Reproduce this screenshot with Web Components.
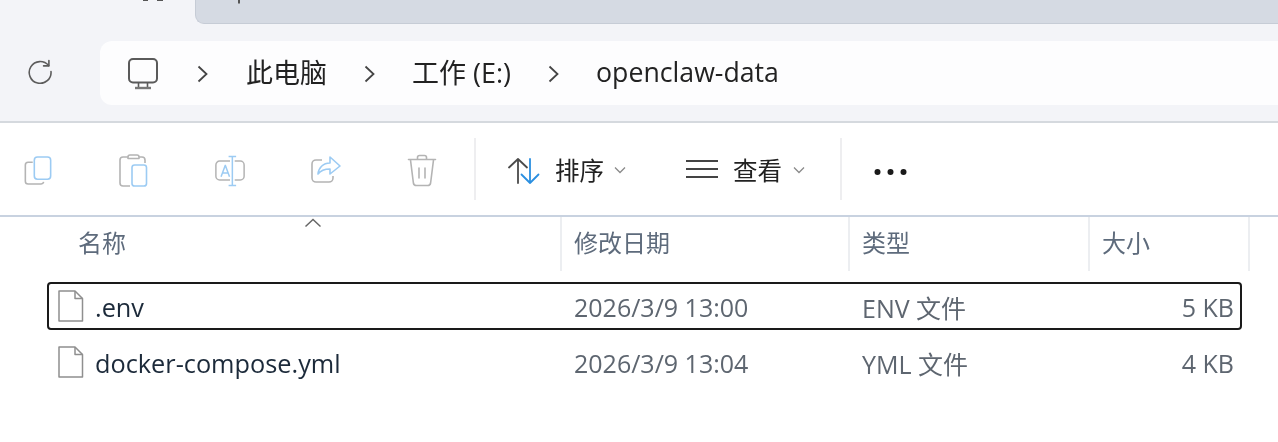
<!DOCTYPE html>
<html lang="zh">
<head>
<meta charset="utf-8">
<title>openclaw-data</title>
<style>
  html, body { margin: 0; background: #fff; }
  body { width: 1278px; height: 442px; overflow: hidden; font-family: "Open Sans", "Noto Sans CJK SC", sans-serif; }
</style>
</head>
<body>
<explorer-window>
  <tab-strip slot="tabs"></tab-strip>
  <nav-bar slot="nav">
    <path-crumb kind="pc"></path-crumb>
    <path-crumb>此电脑</path-crumb>
    <path-crumb>工作 (E:)</path-crumb>
    <path-crumb last>openclaw-data</path-crumb>
  </nav-bar>
  <command-bar slot="commands"></command-bar>
  <file-table slot="files">
    <file-row name=".env" date="2026/3/9 13:00" type="ENV 文件" size="5 KB" selected></file-row>
    <file-row name="docker-compose.yml" date="2026/3/9 13:04" type="YML 文件" size="4 KB"></file-row>
  </file-table>
</explorer-window>

<script>
const define = (name, cls) => {
  if (!customElements.get(name)) customElements.define(name, cls)
}

const GREY = '#b4b4b4'
const BLUE = '#9ccbf3'

const ICONS = {
  refresh: `<svg width="28" height="28" viewBox="0 0 28 28" fill="none" stroke="#5c5c5c" stroke-width="1.6" stroke-linecap="round" stroke-linejoin="round"><path d="M22.6 9.6A10.9 10.9 0 1 0 25 15.5"/><path d="M22.9 4.6v5.3h-5.3"/></svg>`,
  pc: `<svg width="34" height="34" viewBox="0 0 34 34" fill="none" stroke="#5a5a5a" stroke-width="2"><rect x="3" y="2" width="28" height="23.5" rx="4"/><path d="M12.5 26v4M21.5 26v4" stroke-width="1.6"/><path d="M9 31h16" stroke-width="2.4" stroke="#777"/></svg>`,
  copy: `<svg width="30" height="29" viewBox="2 0.5 26 27.500" fill="none" stroke-width="1.5" stroke-linejoin="round"><path d="M10 6.5H5.6A2.6 2.6 0 0 0 3 9.1v15.3A2.6 2.6 0 0 0 5.6 27H18a2.6 2.6 0 0 0 2.4-2" stroke="${GREY}"/><rect x="11.5" y="1.5" width="15.500" height="21" rx="3" stroke="${BLUE}"/></svg>`,
  paste: `<svg width="32" height="36" viewBox="0 0 32 36" fill="none" stroke-width="1.6" stroke-linejoin="round"><path d="M10 4H5A3 3 0 0 0 2 7v23a3 3 0 0 0 3 3h7M21 4h3a3 3 0 0 1 3 3v3" stroke="${GREY}"/><path d="M10 5.500V4a2 2 0 0 1 2-2h7a2 2 0 0 1 2 2v1.500z" stroke="${GREY}"/><rect x="14" y="12" width="14.500" height="21" rx="2.600" stroke="${BLUE}"/></svg>`,
  rename: `<svg width="34" height="34" viewBox="0 0 34 34" fill="none" stroke-width="1.6" stroke-linejoin="round"><path d="M17 6.500H6A4 4 0 0 0 2 10.500v12a4 4 0 0 0 4 4h11M22 6.500h6a4 4 0 0 1 4 4v12a4 4 0 0 1-4 4h-6" stroke="${GREY}"/><path d="M19.500 1.500v31M15.500 1.500h8M15.500 32.500h8M7.500 23l4.500-12 4.500 12M9.200 19h5.600" stroke="${BLUE}"/></svg>`,
  share: `<svg width="32" height="32" viewBox="0 0 32 32" fill="none" stroke-width="1.6" stroke-linejoin="round"><path d="M12 5H6a4 4 0 0 0-4 4v14a4 4 0 0 0 4 4h13a4 4 0 0 0 4-4v-2" stroke="${GREY}"/><path d="M20 2l10 9-10 8v-5c-5 0-9 1-12 5 .5-6 5-11 12-11z" stroke="${BLUE}"/></svg>`,
  trash: `<svg width="30" height="34" viewBox="0 0 30 34" fill="none" stroke="${GREY}" stroke-width="1.600" stroke-linejoin="round" stroke-linecap="round"><path d="M1.500 5.500h27M10.500 5V3.500a2 2 0 0 1 2-2h5a2 2 0 0 1 2 2V5M3.500 6l2.900 23a3 3 0 0 0 3 2.500h11.200a3 3 0 0 0 3-2.500L26.500 6M12 14v10M18 14v10"/></svg>`,
  sort: `<svg width="34" height="28" viewBox="0 0 34 28" fill="none" stroke-width="1.800" stroke-linejoin="round" stroke-linecap="round"><path d="M11 26V2M2 10.500 11 2l9 8.500" stroke="#4a4a4a"/><path d="M23 2v24M14.500 17.500 23 26l8.500-8.500" stroke="#2b8fe0"/></svg>`,
  view: `<svg width="32" height="20" viewBox="0 0 32 20" fill="none" stroke="#444" stroke-width="1.800"><path d="M0 2h32M0 10h32M0 18h32"/></svg>`,
  more: `<svg width="33" height="8" viewBox="0 0 33 8" fill="#1a1a1a"><circle cx="3.500" cy="4" r="3"/><circle cx="16.500" cy="4" r="3"/><circle cx="29.500" cy="4" r="3"/></svg>`,
  chevronDown: `<svg width="12" height="8" viewBox="0 0 12 8" fill="none" stroke="#8a8a8a" stroke-width="1.300"><path d="M1 1.500 6 6.500l5-5"/></svg>`,
  chevronRight: `<svg width="11" height="18" viewBox="0 0 11 18" fill="none" stroke="#444" stroke-width="1.800"><path d="M1.500 1.500 9.500 9l-8 7.500"/></svg>`,
  file: `<svg width="26" height="32" viewBox="0 0 26 32" fill="#fff" stroke="#8f8f8f" stroke-width="1.500" stroke-linejoin="round"><path d="M1 1h16l7.500 7.500V31H1z"/><path d="M17 1v7.500h7.500" fill="none"/></svg>`,
}

class ExplorerWindow extends HTMLElement {
  constructor() {
    super()
    this.attachShadow({ mode: 'open' }).innerHTML = `
      <style>
        :host { display: block; width: 1278px; height: 442px; filter: blur(0.45px); }
        .chrome { display: flex; flex-direction: column; background: #f3f4f8; border-bottom: 2px solid #d5d9de; }
      </style>
      <div class="chrome">
        <slot name="tabs"></slot>
        <slot name="nav"></slot>
      </div>
      <slot name="commands"></slot>
      <slot name="files"></slot>
    `
  }
}

class TabStrip extends HTMLElement {
  constructor() {
    super()
    this.attachShadow({ mode: 'open' }).innerHTML = `
      <style>
        :host { display: flex; height: 24px; padding-left: 195px; position: relative; }
        .tab { flex: 1; background: #d5dae3; border-bottom-left-radius: 9px; border-bottom: 1px solid #c6ccd6; border-left: 1px solid #c6ccd6; }
        .specks { position: absolute; left: 0; top: 0; }
      </style>
      <div class="tab"></div>
      <svg class="specks" width="260" height="4" fill="#555"><rect x="143" y="0" width="5" height="1"/><rect x="157" y="0" width="6" height="1"/><rect x="238" y="0" width="2" height="3.500"/></svg>
    `
  }
}

class NavBar extends HTMLElement {
  constructor() {
    super()
    this.attachShadow({ mode: 'open' }).innerHTML = `
      <style>
        :host { display: flex; height: 97px; box-sizing: border-box; padding-top: 17px; }
        .refresh { width: 100px; display: flex; justify-content: center; padding: 15px 20px 0 0; box-sizing: border-box; height: 64px; }
        .address { flex: 1; height: 64px; box-sizing: border-box; display: flex; align-items: center; background: #fdfdfe; border-radius: 12px 0 0 12px; padding-left: 26px; }
      </style>
      <div class="refresh">${ICONS.refresh}</div>
      <div class="address"><slot></slot></div>
    `
  }
}

class PathCrumb extends HTMLElement {
  constructor() {
    super()
    const isPc = this.getAttribute('kind') === 'pc'
    const isLast = this.hasAttribute('last')
    this.attachShadow({ mode: 'open' }).innerHTML = `
      <style>
        :host { display: flex; align-items: center; color: #222; font-size: 27px; height: 40px; }
        :host([last]) { font-size: 26.700px; }
        .label { margin-top: -3px; }
        .pc { display: flex; margin-top: 2px; }
        .sep { display: flex; margin: 2px 37px 0 37px; }
        :host([kind="pc"]) .sep { margin: 2px 38px 0 37px; }
      </style>
      ${isPc ? `<span class="pc">${ICONS.pc}</span>` : '<span class="label"><slot></slot></span>'}
      ${isLast ? '' : `<span class="sep">${ICONS.chevronRight}</span>`}
    `
  }
}

class CommandButton extends HTMLElement {
  constructor() {
    super()
    this.attachShadow({ mode: 'open' }).innerHTML = `
      <style>
        :host { display: flex; align-items: center; justify-content: center; width: 32px; height: 36px; margin-top: 3px; }
      </style>
      <slot></slot>
    `
  }
}

class CommandBar extends HTMLElement {
  constructor() {
    super()
    const plain = (icon) => `<command-button>${ICONS[icon]}</command-button>`
    this.attachShadow({ mode: 'open' }).innerHTML = `
      <style>
        :host { display: flex; height: 92px; align-items: center; background: #fff; border-bottom: 2px solid #c8d2e0; }
        .edit { display: flex; align-items: center; gap: 64px; padding-left: 22px; }
        .divider { width: 2px; height: 62px; background: #eeeef0; }
        .labelled { display: flex; align-items: center; color: #222; font-size: 24.500px; }
        .labelled svg { display: block; }
        .glyph { display: flex; margin-top: 3px; }
        .chev { display: flex; margin-top: 2px; }
      </style>
      <div class="edit">
        ${plain('copy')}${plain('paste')}${plain('rename')}${plain('share')}${plain('trash')}
      </div>
      <div class="divider" style="margin-left:36px"></div>
      <div class="labelled" style="margin-left:31px">
        <span class="glyph">${ICONS.sort}</span><span style="margin-left:14px">排序</span>
        <span class="chev" style="margin-left:10px">${ICONS.chevronDown}</span>
      </div>
      <div class="labelled" style="margin-left:60px">
        ${ICONS.view}<span style="margin-left:15px">查看</span>
        <span class="chev" style="margin-left:11px">${ICONS.chevronDown}</span>
      </div>
      <div class="divider" style="margin-left:35px"></div>
      <div style="display:flex;margin:6px 0 0 32px">${ICONS.more}</div>
    `
  }
}

class FileTable extends HTMLElement {
  constructor() {
    super()
    this.attachShadow({ mode: 'open' }).innerHTML = `
      <style>
        :host { display: block; background: #fff; }
        .head { display: grid; grid-template-columns: 562px 288px 240px 160px; height: 54px; color: #5e6b7c; font-size: 24px; position: relative; }
        .cell { display: flex; align-items: center; box-sizing: border-box; padding-left: 12px; border-right: 2px solid #eceef1; padding-bottom: 5px; }
        .cell:first-child { padding-left: 78px; }
        .caret { position: absolute; left: 304px; top: 1px; display: flex; }
        .rows { display: flex; flex-direction: column; gap: 8px; padding: 11px 0 0 47px; }
      </style>
      <div class="head">
        <div class="cell">名称</div>
        <div class="cell">修改日期</div>
        <div class="cell">类型</div>
        <div class="cell">大小</div>
        <svg class="caret" width="18" height="10" viewBox="0 0 18 10" fill="none" stroke="#666" stroke-width="1.500"><path d="M1.500 8.500 9 1.500l7.500 7"/></svg>
      </div>
      <div class="rows"><slot></slot></div>
    `
  }
}

class FileRow extends HTMLElement {
  constructor() {
    super()
    const attr = (key) => this.getAttribute(key) || ''
    this.attachShadow({ mode: 'open' }).innerHTML = `
      <style>
        :host { display: grid; grid-template-columns: 515px 288px 240px 1fr; width: 1195px; height: 48px; box-sizing: border-box; align-items: center; color: #5e6670; font-size: 25px; border: 2px solid transparent; border-radius: 4px; }
        :host([selected]) { border-color: #1a1a1a; }
        .name { display: flex; align-items: center; color: #1c2a3a; padding-left: 9px; gap: 10px; font-size: 25.300px; }
        .name svg { flex: none; }
        .name span { margin: 2px 0 0 1px; }
        .cell { padding: 2px 0 0 10px; }
        .size { text-align: right; padding: 2px 6px 0 0; }
      </style>
      <div class="name">${ICONS.file}<span>${attr('name')}</span></div>
      <div class="cell">${attr('date')}</div>
      <div class="cell">${attr('type')}</div>
      <div class="size">${attr('size')}</div>
    `
  }
}

define('explorer-window', ExplorerWindow)
define('tab-strip', TabStrip)
define('nav-bar', NavBar)
define('path-crumb', PathCrumb)
define('command-button', CommandButton)
define('command-bar', CommandBar)
define('file-table', FileTable)
define('file-row', FileRow)
</script>
</body>
</html>
